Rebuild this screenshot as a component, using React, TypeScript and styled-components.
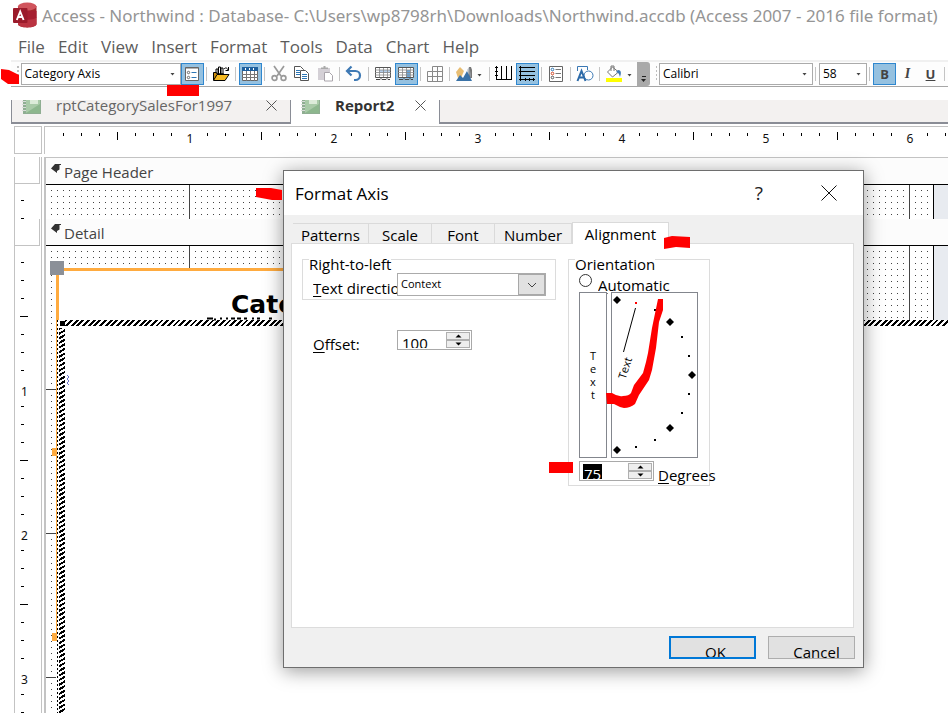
import React from "react";
import styled, { createGlobalStyle, css } from "styled-components";

const GlobalStyle = createGlobalStyle`
  * { box-sizing: border-box; }
  body { margin: 0; background: #fff; font-family: "Open Sans", "Noto Sans", sans-serif; color: #111; }
  button, input, select { font-family: inherit; margin: 0; }
`;

const Page = styled.div`
  position: relative;
  display: flex;
  flex-direction: column;
  min-height: 100vh;
  overflow: hidden;
`;

/* ---------- window chrome ---------- */

const TitleBar = styled.header`
  display: flex;
  align-items: center;
  gap: 5px;
  height: 30px;
  padding-left: 12px;
  color: #959595;
  font-family: "Noto Sans", sans-serif;
  font-size: 17px;
  white-space: nowrap;
  svg { flex: none; }
`;

const MenuBar = styled.nav`
  display: flex;
  align-items: center;
  gap: 13px;
  height: 30px;
  padding: 3px 0 0 18px;
`;

const MenuItem = styled.button`
  padding: 0;
  border: 0;
  background: none;
  color: #5c5c5c;
  font-size: 17px;
  line-height: 24px;
`;

const ToolStrip = styled.div`
  display: flex;
  align-items: center;
  height: 27px;
  margin-left: 11px;
  border-top: 2px solid #f0f0f0;
  border-bottom: 1px solid #a6a6a6;
  background: #fdfdfd;
`;

const Grip = styled.span`
  width: 2px;
  height: 16px;
  margin: 0 2px 0 6px;
  background: repeating-linear-gradient(#bdbdbd 0 2px, transparent 2px 4px);
`;

const ComboBox = styled.label<{ $w: number }>`
  display: grid;
  grid-template-columns: 1fr 10px;
  align-items: center;
  flex: none;
  width: ${(p) => p.$w}px;
  height: 22px;
  border: 1px solid #ababab;
  background: #fff;
  select {
    grid-area: 1 / 1 / 2 / 3;
    width: 100%;
    padding: 0 0 2px 3px;
    border: 0;
    background: none;
    appearance: none;
    color: #000;
    font-size: 12px;
    line-height: 17px;
  }
  svg { grid-area: 1 / 2; pointer-events: none; }
`;

const ToolButton = styled.button<{ $on?: boolean }>`
  display: flex;
  align-items: center;
  justify-content: center;
  flex: none;
  width: 23px;
  height: 22px;
  padding: 0;
  border: 1px solid ${(p) => (p.$on ? "#2f87cf" : "transparent")};
  background: ${(p) => (p.$on ? "#95c1e0" : "none")};
  color: #444;
  font-size: 13px;
  font-weight: 700;
  svg { flex: none; }
  em { font-family: "Liberation Serif", serif; font-size: 14px; }
`;

const DropButton = styled.button`
  flex: none;
  width: 11px;
  height: 22px;
  padding: 0 4px 4px 0;
  border: 0;
  background: none;
`;

const Divider = styled.i`
  flex: none;
  width: 1px;
  height: 14px;
  margin: 0 3px 0 2px;
  background: #c4c4c4;
`;

const Overflow = styled.button`
  display: flex;
  align-items: flex-end;
  justify-content: center;
  flex: none;
  width: 13px;
  height: 24px;
  padding: 0 0 3px;
  border: 0;
  border-radius: 0 3px 3px 0;
  background: #a9a9a9;
`;

/* ---------- document tabs ---------- */

const TabStrip = styled.div`
  display: flex;
  height: 24px;
  margin: 13px 0 2px 11px;
  background: linear-gradient(#8a8d96, #8a8d96) bottom / 100% 2px no-repeat #f3f1f0;
`;

const DocTab = styled.div<{ $active?: boolean }>`
  display: flex;
  align-items: flex-start;
  flex: none;
  width: ${(p) => (p.$active ? 149 : 280)}px;
  padding: 0 13px 0 10px;
  border-right: 1px solid #8a8d96;
  ${(p) =>
    p.$active
      ? css`background: #fff; color: #333; font-weight: 700;`
      : css`border-left: 1px solid #8a8d96; color: #666;`}
  font-size: 15px;
  line-height: 11px;
  span { flex: 1; padding-left: 14px; white-space: nowrap; }
`;

const PlainButton = styled.button`
  display: flex;
  padding: 0;
  border: 0;
  background: none;
`;

/* ---------- report designer ---------- */

const RulerRow = styled.div`
  display: flex;
  height: 28px;
  margin: 0 0 3px 14px;
  gap: 2px;
`;

const RulerCorner = styled.div`
  flex: none;
  width: 28px;
  border: 1px solid #c3c3c3;
`;

const Ruler = styled.div`
  display: flex;
  flex: 1;
  overflow: hidden;
  border-top: 1px solid #c3c3c3;
  border-left: 1px solid #c3c3c3;
`;

const InchX = styled.div<{ $half?: boolean }>`
  display: grid;
  justify-items: center;
  flex: none;
  width: ${(p) => (p.$half ? 73 : 144)}px;
  font-family: "Noto Sans", sans-serif;
  font-size: 12px;
  line-height: 14px;
  svg { grid-area: 1 / 1; justify-self: start; }
  span { grid-area: 1 / 1; padding-top: 5px; }
`;

const Section = styled.section<{ $grow?: boolean }>`
  display: flex;
  gap: 2px;
  padding-left: 14px;
  overflow: hidden;
  ${(p) => (p.$grow ? css`flex: 1 0 494px; height: 494px;` : css`flex: 0 0 62px;`)}
`;

const SideRuler = styled.div`
  display: flex;
  flex-direction: column;
  align-items: flex-start;
  flex: none;
  width: 28px;
  border-left: 1px solid #c3c3c3;
  border-right: 1px solid #c3c3c3;
  overflow: hidden;
`;

const SideBox = styled.div`
  flex: none;
  width: 25px;
  height: 27px;
  border-right: 1px solid #c3c3c3;
  border-bottom: 1px solid #c3c3c3;
`;

const InchY = styled.div<{ $half?: boolean }>`
  display: grid;
  align-items: center;
  flex: none;
  height: ${(p) => (p.$half ? 71 : 144)}px;
  font-family: "Noto Sans", sans-serif;
  font-size: 12px;
  line-height: 14px;
  svg { grid-area: 1 / 1; align-self: start; }
  span { grid-area: 1 / 1; padding: 5px 0 0 6px; }
`;

const SectionBody = styled.div`
  display: flex;
  flex-direction: column;
  flex: 1;
  border-left: 2px solid #c3c3c3;
`;

const Band = styled.div<{ $first?: boolean }>`
  display: flex;
  align-items: center;
  gap: 3px;
  flex: none;
  height: ${(p) => (p.$first ? 28 : 27)}px;
  padding: ${(p) => (p.$first ? 2 : 1)}px 0 0 5px;
  border-top: ${(p) => (p.$first ? "1px solid #c3c3c3" : "0")};
  border-bottom: 1px solid #000;
  background: #fcfcfc;
  color: #444;
  font-size: 15px;
  svg { margin-bottom: 8px; }
`;

const Canvas = styled.div`
  position: relative;
  flex: 1;
  overflow: hidden;
  background: #e8ebf0;
`;

const Paper = styled.div`
  width: 888px;
  height: 100%;
  border-right: 1px solid #000;
  background:
    linear-gradient(90deg, transparent 143px, #444 143px) 0 0 / 144px 100%,
    conic-gradient(from 90deg at 5px 5px, #444 90deg, transparent 0) 0 0 / 6px 6px,
    linear-gradient(transparent 143px, #444 143px) 0 0 / 100% 144px,
    #fff;
`;

const ChartObject = styled.div`
  position: absolute;
  left: 10px;
  top: 22px;
  width: 600px;
  height: 366px;
  border-top: 3px solid #ffab3f;
  border-left: 3px solid #ffab3f;
  background: #fff;
`;

const ChartTitle = styled.h1`
  margin: 0;
  padding: 16px 0 0 172px;
  color: #000;
  font-family: "DejaVu Sans", sans-serif;
  font-size: 25px;
  line-height: 36px;
  white-space: nowrap;
`;

const EditFrame = styled.div`
  position: absolute;
  left: 10px;
  right: 0;
  top: 74px;
  bottom: 0;
  background:
    repeating-linear-gradient(135deg, #000 0 2px, #fff 2px 4px) 9px 0 / 100% 6px no-repeat,
    repeating-linear-gradient(150deg, #000 0 2px, #fff 2px 4px) 3px 8px / 6px 100% no-repeat,
    repeating-linear-gradient(#000 0 2px, #fff 2px 4px) 1px 0 / 1px 100% no-repeat,
    #fff;
`;

const Handle = styled.i<{ $x: number; $y: number; $w: number; $h: number; $c: string }>`
  position: absolute;
  left: ${(p) => p.$x}px;
  top: ${(p) => p.$y}px;
  width: ${(p) => p.$w}px;
  height: ${(p) => p.$h}px;
  background: ${(p) => p.$c};
`;

const CanvasMark = styled.svg<{ $x: number; $y: number }>`
  position: absolute;
  left: ${(p) => p.$x}px;
  top: ${(p) => p.$y}px;
`;

/* ---------- dialog ---------- */

const Dialog = styled.div`
  position: absolute;
  left: 283px;
  top: 170px;
  width: 581px;
  border: 1px solid #6e6e6e;
  background: #f0f0f0;
  box-shadow: 0 3px 18px rgba(0, 0, 0, 0.4);
  color: #000;
  font-size: 15px;
`;

const DialogTitle = styled.div`
  display: flex;
  align-items: center;
  height: 44px;
  padding: 0 26px 0 11px;
  background: #fff;
  h2 { flex: 1; margin: 0; font-size: 17px; font-weight: 400; }
`;

const HelpButton = styled(PlainButton)`
  margin-right: 58px;
  color: #222;
  font-size: 19px;
  line-height: 24px;
`;

const DialogTabs = styled.div`
  display: flex;
  align-items: flex-end;
  height: 28px;
  padding-left: 9px;
`;

const DialogTab = styled.button<{ $w: number; $on?: boolean }>`
  width: ${(p) => p.$w}px;
  height: ${(p) => (p.$on ? 22 : 20)}px;
  margin-bottom: ${(p) => (p.$on ? -1 : 0)}px;
  padding: ${(p) => (p.$on ? "1px 0 0" : "2px 0 0")};
  border: 1px solid #dadada;
  border-width: ${(p) => (p.$on ? "1px 1px 0" : "1px 1px 0 0")};
  background: ${(p) => (p.$on ? "#fff" : "#f0f0f0")};
  color: #000;
  font-size: 15px;
  line-height: 16px;
  white-space: nowrap;
`;

const Panel = styled.div`
  display: flex;
  align-items: flex-start;
  gap: 12px;
  min-height: 385px;
  margin: 0 9px 0 7px;
  padding: 5px 10px;
  border: 1px solid #dcdcdc;
  background: #fff;
`;

const Group = styled.fieldset<{ $w: number }>`
  width: ${(p) => p.$w}px;
  min-width: 0;
  margin: 0;
  padding: 0 0 3px 10px;
  border: 1px solid #dcdcdc;
  legend {
    margin-left: -4px;
    padding: 10px 0 0;
    line-height: 10px;
  }
`;

const Field = styled.div<{ $top: number }>`
  display: flex;
  align-items: flex-start;
  margin-top: ${(p) => p.$top}px;
`;

const FieldLabel = styled.label<{ $w?: number; $drop?: number }>`
  flex: none;
  width: ${(p) => (p.$w ? `${p.$w}px` : "auto")};
  padding-top: ${(p) => p.$drop ?? 0}px;
  overflow-x: clip;
  line-height: 16px;
  white-space: nowrap;
  u { text-underline-offset: 2px; }
`;

const Indent = styled.span`
  padding-left: 11px;
`;

const Drop = styled.div`
  display: grid;
  grid-template-columns: 1fr 27px;
  width: 149px;
  height: 23px;
  border: 1px solid #ababab;
  select {
    grid-area: 1 / 1 / 2 / 3;
    padding: 0 0 2px 3px;
    border: 0;
    background: none;
    appearance: none;
    color: #000;
    font-size: 11px;
  }
  span {
    display: flex;
    align-items: center;
    justify-content: center;
    grid-area: 1 / 2;
    border: 1px solid #a8a8a8;
    background: #e1e1e1;
    pointer-events: none;
  }
`;

const Spin = styled.div<{ $selected?: boolean }>`
  display: flex;
  justify-content: space-between;
  flex: none;
  width: 75px;
  height: 20px;
  padding: 1px 1px 1px 3px;
  border: 1px solid #a9a9a9;
  background: #fff;
  input {
    width: ${(p) => (p.$selected ? 19 : 40)}px;
    height: 15px;
    margin-top: 1px;
    padding: 5px 0 0 1px;
    border: 0;
    background: ${(p) => (p.$selected ? "#000" : "#fff")};
    color: ${(p) => (p.$selected ? "#fff" : "#000")};
    font-size: 15px;
    line-height: 15px;
  }
`;

const SpinKeys = styled.div`
  display: grid;
  grid-template-rows: 1fr 1fr;
  width: 24px;
  button {
    display: flex;
    align-items: center;
    justify-content: center;
    padding: 0;
    border: 1px solid #b0b0b0;
    background: #eee;
  }
`;

const Radio = styled.input`
  appearance: none;
  flex: none;
  width: 13px;
  height: 13px;
  margin: 1px 6px 0 0;
  border: 1px solid #333;
  border-radius: 50%;
  background: #fff;
`;

const AutoRow = styled.div`
  display: flex;
  align-items: flex-start;
  height: 19px;
  margin-top: 4px;
`;

const OrientBoxes = styled.div`
  display: flex;
  gap: 4px;
  height: 166px;
`;

const VerticalText = styled.button`
  width: 28px;
  padding: 0;
  border: 1px solid #83868d;
  background: #fff;
  color: #000;
  font-size: 11px;
  line-height: 13px;
  span { display: block; }
`;

const DialBox = styled.div`
  width: 87px;
  border: 1px solid #83868d;
`;

const DegreesRow = styled.div`
  display: flex;
  align-items: flex-start;
  gap: 4px;
  height: 21px;
  margin-top: 3px;
`;

const Buttons = styled.div`
  display: flex;
  justify-content: flex-end;
  gap: 12px;
  padding: 8px 8px 8px 0;
`;

const DialogButton = styled.button<{ $default?: boolean }>`
  width: 87px;
  height: 23px;
  padding: ${(p) => (p.$default ? "6px 0 0 6px" : "7px 0 0 10px")};
  overflow: hidden;
  border: ${(p) => (p.$default ? "2px solid #0078d7" : "1px solid #adadad")};
  background: #e1e1e1;
  color: #000;
  font-size: 15px;
  line-height: 16px;
`;

const Marker = styled.svg`
  position: absolute;
  left: 0;
  top: 60px;
  pointer-events: none;
`;

/* ---------- drawings ---------- */

const Arrow = () => (
  <svg width="5" height="3" viewBox="0 0 5 3"><path d="M.5 0h4L2.500 2.500z" fill="#444" /></svg>
);
const UpDown = ({ down }: { down?: boolean }) => (
  <svg width="7" height="4" viewBox="0 0 7 4"><path d={down ? "M0.500 0.500h6l-3 3z" : "M0.500 3.500h6l-3-3z"} fill="#000" /></svg>
);
const Cross = ({ size, color }: { size: number; color: string }) => (
  <svg width={size} height={size} viewBox={`0 0 ${size} ${size}`}>
    <path d={`M.5 .5L${size - 0.5} ${size - 0.5}M${size - 0.5} .5L.5 ${size - 0.5}`} stroke={color} />
  </svg>
);

const AccessLogo = () => (
  <svg width="25" height="26" viewBox="0 0 25 26">
    <path d="M6 4v18c0 4.500 18.500 4.500 18.500 0V4z" fill="#a4262c" />
    <path d="M6 15h18.500v7c0 4.500-18.500 4.500-18.500 0z" fill="#ba3341" />
    <path d="M6 9h18.500v6.500c-3 3-15 3-18.500 0z" fill="#a61f30" />
    <ellipse cx="15.200" cy="4.500" rx="9.300" ry="4" fill="#d0545c" />
    <rect x="1" y="6" width="14.500" height="15" rx="1" fill="#9b1b2b" />
    <path d="M4.800 18L8.200 9.500L11.600 18M6.200 15h4" fill="none" stroke="#fff" strokeWidth="1.900" />
  </svg>
);

const ReportIcon = () => (
  <svg width="20" height="14" viewBox="0 0 20 14">
    <path d="M1 0h18v14H1z" fill="#8fae92" />
    <path d="M4 0h14v13H4z" fill="#a9caa8" />
    <path d="M8 0h8v4H8z" fill="#dcebd9" />
    <path d="M4 13L18 4v9z" fill="#8db78e" />
    <path d="M0 1.500h4M0 4.500h4M0 7.500h4M0 10.500h4" stroke="#d9ddd9" />
  </svg>
);

const icons: Record<string, React.ReactNode> = {
  props: <><path d="M2.500 2.500h13v13h-13z" fill="#fff" stroke="#666" /><path d="M2.500 3h13" stroke="#666" /><g fill="none" stroke="#666"><circle cx="5.500" cy="7.500" r="1.200" /><circle cx="5.500" cy="12.500" r="1.200" /></g><path d="M8.500 7.500h5M8.500 12.500h5" stroke="#2c76b5" /></>,
  open: <><path d="M4 4h2v5H4zM6.500 2h2v7h-2zM9 3h2v6H9z" fill="#fff" stroke="#000" /><path d="M1.500 15V7.500h3L5 9h7" fill="#c98a08" stroke="#000" /><path d="M1.500 15.500l3.500-6h12l-4 6z" fill="#f5b921" stroke="#000" /><path d="M12 4c2-2 3-1 4 1m.5-3v3.500h-3" fill="none" stroke="#000" /></>,
  sheet: <><path d="M1.500 2.500h15v13h-15z" fill="#fff" stroke="#666" /><path d="M1 2h16v4H1z" fill="#1d5f9e" /><path d="M4 4h1M8 4h1M12 4h1" stroke="#fff" strokeWidth="2" /><path d="M1 9.500h16M1 12.500h16M5.500 6v10M9.500 6v10M13.500 6v10" stroke="#777" /></>,
  cut: <g fill="none" stroke="#999" strokeWidth="1.700"><path d="M4 1l7 10M14 1L7 11" /><circle cx="4.500" cy="13" r="2.400" /><circle cx="13.500" cy="13" r="2.400" /></g>,
  copy: <><path d="M1.500 1.500h6l3 3v8h-9z" fill="#fff" stroke="#555" /><path d="M3 5.500h4M3 7.500h4M3 9.500h4" stroke="#2c76b5" /><path d="M7.500 5.500h5l3 3v7h-8z" fill="#fff" stroke="#555" /><path d="M9 9.500h5M9 11.500h5M9 13.500h5" stroke="#2c76b5" /></>,
  paste: <><path d="M2 3h12v12H2z" fill="#d4d0d6" /><path d="M5 4V2.500h2.500V1h2v1.500H12V4z" fill="#aaa" /><path d="M8.500 7.500h5l3 3v5.500h-8z" fill="#fff" stroke="#a9a4ab" /></>,
  undo: <path d="M2 6h8.500a4 4 0 010 9H9M6.500 1.500L2 6l4.500 4.500" fill="none" stroke="#3e79b4" strokeWidth="2.200" />,
  byRow: <><path d="M1.500 2.500h15v10h-15z" fill="#fff" stroke="#555" /><path d="M5 5h11v3H5z" fill="#b5d0ed" /><path d="M1 5h16M1 7.500h16M1 10h16M5.500 3v9M9.500 3v9M13.500 3v9" stroke="#888" strokeWidth=".8" /><path d="M2 14.500h4l1-1 1 1h4l1-1 1 1h2" fill="none" stroke="#444" /></>,
  byCol: <><path d="M1.500 2.500h15v10h-15z" fill="#fff" stroke="#555" /><path d="M9 5h4v7H9z" fill="#6ba7da" /><path d="M1 5h16M1 7.500h16M1 10h16M5.500 3v9M9.500 3v9M13.500 3v9" stroke="#888" strokeWidth=".8" /><path d="M2 14.500h4l1-1 1 1h4l1-1 1 1h2" fill="none" stroke="#444" /></>,
  table: <path d="M6.500 1.500h10v15h-15v-10h5zM1.500 11.500h15M6.500 6.500h10M6.500 6.500v10M11.500 1.500v15" fill="none" stroke="#888" />,
  chart: <><path d="M5 2l4 4-3 7H3L1 7z" fill="#e8bd72" /><path d="M14 2l2 0 1 3v8h-4z" fill="#777" /><path d="M1 16l4-6 3 3 4-7 5 10z" fill="#3a72a7" /><path d="M12 5l2-3 2 7v4z" fill="#a1aab2" opacity=".6" /></>,
  gridX: <path d="M1.500 1v14M6.500 1v14M11.500 1v14M16.500 1v14M1 14.500h16M0 2.500h3M0 6.500h3M0 10.500h3" stroke="#000" />,
  gridY: <path d="M2.500 1v15M1 2.500h16M1 6.500h16M1 10.500h16M1 14.500h16M7.500 13v3M11.500 13v3M15.500 13v3" stroke="#000" />,
  legend: <><path d="M2.500 1.500h13v15h-13z" fill="#fff" stroke="#666" /><g fill="none"><circle cx="5.500" cy="4.500" r="1.300" stroke="#2c76b5" /><circle cx="5.500" cy="8.500" r="1.300" stroke="#d24726" /><circle cx="5.500" cy="12.500" r="1.300" stroke="#555" /></g><path d="M8.500 4.500H14M8.500 8.500H14M8.500 12.500H14" stroke="#777" /></>,
  shapes: <><path d="M1.500 6V1.500h10V5" fill="none" stroke="#3a78b4" /><circle cx="12.500" cy="10.500" r="4.500" fill="#fff" stroke="#3a78b4" /><path d="M1.500 16L5.500 6L9.500 16M3 12.500h5" fill="none" stroke="#2c6aa8" strokeWidth="2" /></>,
  fill: <><path d="M7.500 2l6 5-6 5-5-5z" fill="#fff" stroke="#777" /><path d="M6 6V1h3v5" fill="none" stroke="#777" /><path d="M13 5c4 0 3 4 2 7-1-3-1-4-4-5z" fill="#3e79b4" /><path d="M1 13h16v4H1z" fill="#ff0" /></>,
};
const Icon = ({ name }: { name: string }) => (
  <svg width="18" height="18" viewBox="0 0 18 18">{icons[name]}</svg>
);

const Pin = () => (
  <svg width="10" height="9" viewBox="0 0 10 9"><path d="M0 4.500L4 0h6v1H8.500v4.500L6 7v2z" fill="#333" /></svg>
);

const TicksX = ({ half }: { half?: boolean }) => (
  <svg width={half ? 73 : 144} height="20" viewBox={`0 0 ${half ? 73 : 144} 20`} shapeRendering="crispEdges">
    <path d={half ? "M18.500 6v3M36.500 6v3M54.500 6v3M72.500 5v8" : "M17.500 6v3M35.500 6v3M53.500 6v3M89.500 6v3M107.500 6v3M125.500 6v3M143.500 5v8"} stroke="#000" />
  </svg>
);
const TicksY = ({ half }: { half?: boolean }) => (
  <svg width="20" height={half ? 71 : 144} viewBox={`0 0 20 ${half ? 71 : 144}`} shapeRendering="crispEdges">
    <path d={half ? "M6 16.500h3M6 34.500h3M6 52.500h3M5 70.500h8" : "M6 17.500h3M6 35.500h3M6 53.500h3M6 89.500h3M6 107.500h3M6 125.500h3M5 143.500h8"} stroke="#000" />
  </svg>
);

const diamonds = [[5, 7], [58, 29], [80, 82], [58, 135], [5, 157]];
const dots = [[43, 17], [70, 44], [77, 63], [77, 101], [70, 120], [43, 147], [24, 154]];
const Dial = () => (
  <svg width="85" height="164" viewBox="0 0 85 164">
    {diamonds.map(([x, y]) => <path key={y} d={`M${x - 4} ${y}l4-4 4 4-4 4z`} />)}
    {dots.map(([x, y]) => <rect key={y} x={x - 1} y={y - 1} width="2" height="2" />)}
    <rect x="23" y="9" width="2" height="2" fill="red" />
    <path d="M23.500 15L11.500 59" stroke="#000" />
    <text x="13" y="79" transform="rotate(-72 13 75)" textAnchor="middle" fontSize="11">Text</text>
  </svg>
);

const Tool = ({ name, label, on }: { name: string; label: string; on?: boolean }) => (
  <ToolButton $on={on} aria-label={label}><Icon name={name} /></ToolButton>
);

const Combo = ({ w, value, label }: { w: number; value: string; label: string }) => (
  <ComboBox $w={w}>
    <select aria-label={label}><option>{value}</option></select>
    <Arrow />
  </ComboBox>
);

const Spinner = ({ id, value, selected }: { id: string; value: string; selected?: boolean }) => (
  <Spin $selected={selected}>
    <input id={id} type="text" defaultValue={value} />
    <SpinKeys>
      <button aria-label="Increase"><UpDown /></button>
      <button aria-label="Decrease"><UpDown down /></button>
    </SpinKeys>
  </Spin>
);

const menus = ["File", "Edit", "View", "Insert", "Format", "Tools", "Data", "Chart", "Help"];

export default function App() {
  return (
    <Page>
      <GlobalStyle />
      <TitleBar>
        <AccessLogo />
        <span>Access - Northwind : Database- C:\Users\wp8798rh\Downloads\Northwind.accdb (Access 2007 - 2016 file format)</span>
      </TitleBar>
      <MenuBar>{menus.map((m) => <MenuItem key={m}>{m}</MenuItem>)}</MenuBar>

      <ToolStrip>
        <Grip />
        <Combo w={160} value="Category Axis" label="Chart Objects" />
        <Tool name="props" label="Format Object" on />
        <Divider />
        <Tool name="open" label="Import File" />
        <Divider />
        <Tool name="sheet" label="View Datasheet" on />
        <Divider />
        <Tool name="cut" label="Cut" />
        <Tool name="copy" label="Copy" />
        <Tool name="paste" label="Paste" />
        <Divider />
        <Tool name="undo" label="Undo" />
        <Divider />
        <Tool name="byRow" label="By Row" />
        <Tool name="byCol" label="By Column" on />
        <Divider />
        <Tool name="table" label="Data Table" />
        <Divider />
        <Tool name="chart" label="Chart Type" />
        <DropButton aria-label="Chart Types"><Arrow /></DropButton>
        <Divider />
        <Tool name="gridX" label="Category Axis Gridlines" />
        <Tool name="gridY" label="Value Axis Gridlines" on />
        <Divider />
        <Tool name="legend" label="Legend" />
        <Divider />
        <Tool name="shapes" label="Drawing" />
        <Divider />
        <Tool name="fill" label="Fill Color" />
        <DropButton aria-label="Fill Colors"><Arrow /></DropButton>
        <Overflow aria-label="Toolbar Options">
          <svg width="7" height="8" viewBox="0 0 7 8"><path d="M2 1.500h4" stroke="#222" /><path d="M1 4h5L3.500 7z" fill="#222" /></svg>
        </Overflow>
        <Grip />
        <Combo w={154} value="Calibri" label="Font" />
        <Divider />
        <Combo w={48} value="58" label="Font Size" />
        <Divider />
        <ToolButton $on>B</ToolButton>
        <ToolButton><em>I</em></ToolButton>
        <ToolButton><u>U</u></ToolButton>
        <Divider />
      </ToolStrip>

      <TabStrip>
        <DocTab>
          <ReportIcon /><span>rptCategorySalesFor1997</span>
          <PlainButton aria-label="Close rptCategorySalesFor1997"><Cross size={11} color="#555" /></PlainButton>
        </DocTab>
        <DocTab $active>
          <ReportIcon /><span>Report2</span>
          <PlainButton aria-label="Close Report2"><Cross size={11} color="#555" /></PlainButton>
        </DocTab>
      </TabStrip>

      <RulerRow>
        <RulerCorner />
        <Ruler>
          <InchX $half><TicksX half /></InchX>
          {[1, 2, 3, 4, 5, 6].map((n) => <InchX key={n}><TicksX /><span>{n}</span></InchX>)}
        </Ruler>
      </RulerRow>

      <Section>
        <SideRuler>
          <SideBox />
          <InchY $half><TicksY half /></InchY>
        </SideRuler>
        <SectionBody>
          <Band $first><Pin />Page Header</Band>
          <Canvas><Paper /></Canvas>
        </SectionBody>
      </Section>

      <Section $grow>
        <SideRuler>
          <SideBox />
          <InchY $half><TicksY half /></InchY>
          {[1, 2, 3].map((n) => <InchY key={n}><TicksY /><span>{n}</span></InchY>)}
        </SideRuler>
        <SectionBody>
          <Band><Pin />Detail</Band>
          <Canvas>
            <Paper />
            <ChartObject>
              <ChartTitle>Category Sales</ChartTitle>
            </ChartObject>
            <EditFrame />
            <CanvasMark $x={161} $y={71} width="80" height="4" viewBox="0 0 80 4">
              <path d="M0 1.500h6M7 2.500h2M13 1.500h2M19 1.500h2M24 1.500h4M30 1.500h4M37 1.500h3M45 1.500h2M50 1.500h3M62 1.500h3" stroke="#000" strokeWidth="2" />
            </CanvasMark>
            <Handle $x={14} $y={75} $w={5} $h={5} $c="#000" />
            <Handle $x={10} $y={74} $w={1} $h={315} $c="#ffab3f" />
            <Handle $x={4} $y={15} $w={14} $h={14} $c="#8b9098" />
            <Handle $x={6} $y={202} $w={5} $h={8} $c="#ffab3f" />
            <Handle $x={6} $y={387} $w={5} $h={8} $c="#ffab3f" />
            <CanvasMark $x={20} $y={129} width="4" height="11" viewBox="0 0 4 11">
              <path d="M1 0l2 2-2 2 2 2-2 2 2 2" fill="none" stroke="#6a73c8" />
            </CanvasMark>
          </Canvas>
        </SectionBody>
      </Section>

      <Dialog role="dialog" aria-label="Format Axis">
        <DialogTitle>
          <h2>Format Axis</h2>
          <HelpButton aria-label="Help">?</HelpButton>
          <PlainButton aria-label="Close"><Cross size={16} color="#111" /></PlainButton>
        </DialogTitle>
        <DialogTabs role="tablist">
          <DialogTab role="tab" $w={76}>Patterns</DialogTab>
          <DialogTab role="tab" $w={63}>Scale</DialogTab>
          <DialogTab role="tab" $w={63}>Font</DialogTab>
          <DialogTab role="tab" $w={77}>Number</DialogTab>
          <DialogTab role="tab" $w={97} $on>Alignment</DialogTab>
        </DialogTabs>
        <Panel>
          <div>
            <Group $w={254}>
              <legend>Right-to-left</legend>
              <Field $top={4}>
                <FieldLabel htmlFor="direction" $w={84} $drop={7}><u>T</u>ext direction:</FieldLabel>
                <Drop>
                  <select id="direction"><option>Context</option></select>
                  <span><svg width="10" height="6" viewBox="0 0 10 6"><path d="M1 1l4 4 4-4" fill="none" stroke="#444" /></svg></span>
                </Drop>
              </Field>
            </Group>
            <Field $top={30}>
              <FieldLabel htmlFor="offset" $w={95} $drop={6}><Indent><u>O</u>ffset:</Indent></FieldLabel>
              <Spinner id="offset" value="100" />
            </Field>
          </div>
          <Group $w={142}>
            <legend>Orientation</legend>
            <AutoRow>
              <Radio type="radio" id="automatic" name="orientation" />
              <FieldLabel htmlFor="automatic" $drop={4}><u>A</u>utomatic</FieldLabel>
            </AutoRow>
            <OrientBoxes>
              <VerticalText aria-label="Vertical text">{["T", "e", "x", "t"].map((c, i) => <span key={i}>{c}</span>)}</VerticalText>
              <DialBox><Dial /></DialBox>
            </OrientBoxes>
            <DegreesRow>
              <Spinner id="degrees" value="75" selected />
              <FieldLabel htmlFor="degrees" $drop={6}><u>D</u>egrees</FieldLabel>
            </DegreesRow>
          </Group>
        </Panel>
        <Buttons>
          <DialogButton $default>OK</DialogButton>
          <DialogButton>Cancel</DialogButton>
        </Buttons>
      </Dialog>

      <Marker width="700" height="420" viewBox="0 60 700 420" fill="#f00">
        <path d="M1 69l8 1 10 5v9H8l-7-5z" />
        <path d="M167 85h32v11h-32z" />
        <path d="M256 188l15 0 11 2v10h-10l-16-3z" />
        <path d="M664 238l8-2 18 1v11l-14-1-12 2z" />
        <path d="M549 462h24v11h-24z" />
        <path d="M606 393h6q6 4 11 3 6 0 8-3l3-8 9-12 3-11 2-9 4-25 6-29h5v11l-4 12-3 26-4 22-3 10-10 15-4 9q-5 4-11 4-5-1-10-4h-7z" />
      </Marker>
    </Page>
  );
}
